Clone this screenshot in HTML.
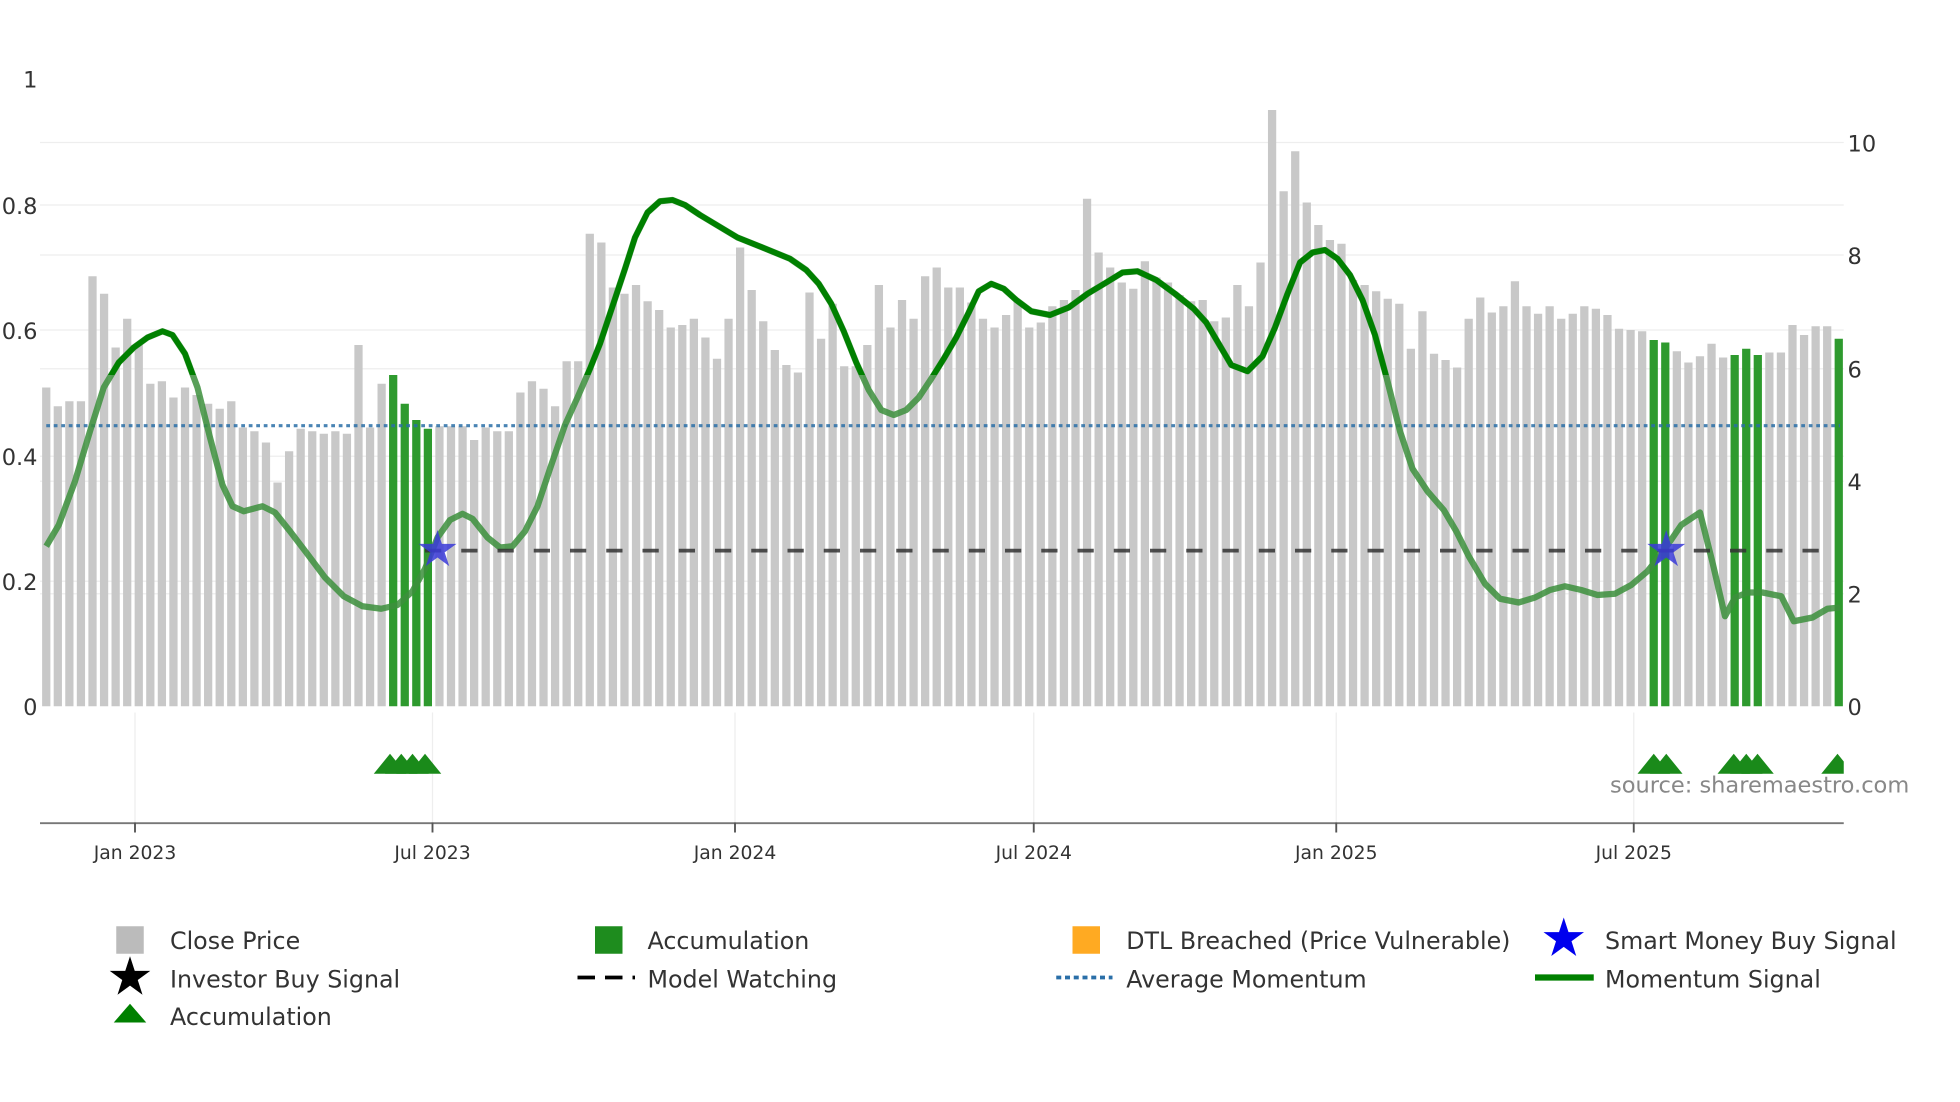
<!DOCTYPE html>
<html><head><meta charset="utf-8"><style>
html,body{margin:0;padding:0;background:#fff;width:1960px;height:1102px;overflow:hidden}
svg{display:block}
text{font-family:"DejaVu Sans","Liberation Sans",sans-serif;fill:#333}
</style></head><body>
<svg id="s" width="1960" height="1102" viewBox="0 0 1568 881.6" xmlns="http://www.w3.org/2000/svg">
<g stroke="#eee" stroke-width="1">
<line x1="32" x2="1475" y1="114" y2="114"/><line x1="32" x2="1475" y1="164" y2="164"/>
<line x1="32" x2="1475" y1="204" y2="204"/><line x1="32" x2="1475" y1="264" y2="264"/>
<line x1="32" x2="1475" y1="295" y2="295"/><line x1="32" x2="1475" y1="365" y2="365"/>
<line x1="32" x2="1475" y1="385" y2="385"/><line x1="32" x2="1475" y1="465" y2="465"/>
<line x1="32" x2="1475" y1="475" y2="475"/>
<line x1="108" x2="108" y1="570" y2="658"/><line x1="346" x2="346" y1="570" y2="658"/>
<line x1="588" x2="588" y1="570" y2="658"/><line x1="827" x2="827" y1="570" y2="658"/>
<line x1="1069" x2="1069" y1="570" y2="658"/><line x1="1307" x2="1307" y1="570" y2="658"/>
</g>
<g id="bars"></g>
<line x1="37" x2="1472" y1="340.5" y2="340.5" stroke="#2a6fa8" stroke-width="2.5" stroke-dasharray="3,3" opacity="0.85"/>
<path id="mom" fill="none" stroke="#3c8f3c" stroke-width="5" stroke-opacity="0.85" stroke-linejoin="round"/>
<clipPath id="c"><rect x="0" y="0" width="1550" height="300"/></clipPath>
<path id="mom2" fill="none" stroke="#008000" stroke-width="4.5" clip-path="url(#c)" stroke-linejoin="round"/>
<line x1="340" x2="1462" y1="440.5" y2="440.5" stroke="#333" stroke-width="3" stroke-dasharray="13,16" opacity="0.85"/>
<g fill="#3a3ad8" opacity="0.85">
<polygon id="st1" points=""/><polygon id="st2" points=""/>
</g>
<g id="tri" fill="#1a8a1a"></g>
<line x1="32" x2="1475" y1="658.5" y2="658.5" stroke="#777" stroke-width="1.5"/>
<g stroke="#555" stroke-width="1.5">
<line x1="108" x2="108" y1="658" y2="666"/><line x1="346" x2="346" y1="658" y2="666"/>
<line x1="588" x2="588" y1="658" y2="666"/><line x1="827" x2="827" y1="658" y2="666"/>
<line x1="1069" x2="1069" y1="658" y2="666"/><line x1="1307" x2="1307" y1="658" y2="666"/>
</g>
<g font-size="15" text-anchor="middle">
<text x="108" y="687">Jan 2023</text><text x="346" y="687">Jul 2023</text>
<text x="588" y="687">Jan 2024</text><text x="827" y="687">Jul 2024</text>
<text x="1069" y="687">Jan 2025</text><text x="1307" y="687">Jul 2025</text>
</g>
<g font-size="18" text-anchor="end">
<text x="30" y="70">1</text><text x="30" y="171">0.8</text><text x="30" y="271">0.6</text>
<text x="30" y="372">0.4</text><text x="30" y="472">0.2</text><text x="30" y="572">0</text>
</g>
<g font-size="18">
<text x="1478" y="121">10</text><text x="1478" y="211">8</text><text x="1478" y="302">6</text>
<text x="1478" y="392">4</text><text x="1478" y="482">2</text><text x="1478" y="572">0</text>
</g>
<text x="1288" y="634" font-size="18" style="fill:#888">source: sharemaestro.com</text>
<g font-size="19">
<rect x="93" y="741" width="22" height="22" fill="#bbb"/><text x="136" y="759">Close Price</text>
<rect x="476" y="741" width="22" height="22" fill="#1e8c1e"/><text x="518" y="759">Accumulation</text>
<rect x="858" y="741" width="22" height="22" fill="#ffaa22"/><text x="901" y="759">DTL Breached (Price Vulnerable)</text>
<polygon id="ls1" fill="#0000ee"/><text x="1284" y="759">Smart Money Buy Signal</text>
<polygon id="ls2" fill="#000"/><text x="136" y="790">Investor Buy Signal</text>
<line x1="462" x2="508" y1="782" y2="782" stroke="#000" stroke-width="3" stroke-dasharray="14,8"/><text x="518" y="790">Model Watching</text>
<line x1="845" x2="890" y1="782" y2="782" stroke="#2a6fa8" stroke-width="3" stroke-dasharray="4,3"/><text x="901" y="790">Average Momentum</text>
<line x1="1228" x2="1275" y1="782" y2="782" stroke="#008000" stroke-width="5"/><text x="1284" y="790">Momentum Signal</text>
<polygon points="104,803 117,818 91,818" fill="#008000"/><text x="136" y="820">Accumulation</text>
</g>
</svg>
<script>
var tops=[310,325,321,321,221,235,278,255,276,307,305,318,310,316,323,327,321,342,345,354,386,361,343,345,347,345,347,276,342,307,300,323,336,343,341,341,341,352,342,345,345,314,305,311,325,289,289,187,194,230,228,241,248,262,260,255,270,287,255,198,232,257,280,292,298,234,271,243,293,293,276,228,262,255,221,214,230,230,242,255,262,252,241,262,258,245,240,232,159,202,214,226,231,209,222,226,236,241,240,257,254,228,245,210,88,153,121,162,180,192,195,224,228,233,239,243,279,249,283,272,284,288,294,255,238,250,245,225,245,251,245,255,251,245,247,252,263,264,265,272,274,281,290,285,275,286,284,279,284,282,282,260,268,261,261,271];
tops.splice(119,2);tops.splice(73,0,240);tops.splice(50,0,235);
var gx=[312,321,330,340,1323,1333,1387,1397,1406,1470];
var g=document.getElementById('bars'),n=tops.length,h='';
for(var i=0;i<n;i++){var x=37+i*(1434/(n-1));var gr=gx.some(function(v){return Math.abs(v-x)<4.6;});
h+='<rect x="'+(x-3.3)+'" y="'+tops[i]+'" width="6.6" height="'+(565-tops[i])+'" fill="'+(gr?'#2e9a2e':'#c8c8c8')+'"/>';}
g.innerHTML=h;
var pts=[[37,437],[47,420],[60,385],[72,345],[83,310],[95,290],[107,278],[118,270],[130,265],[138,268],[148,283],[158,310],[168,350],[178,388],[186,405],[195,409],[210,405],[220,410],[232,425],[245,442],[260,462],[275,477],[290,485],[305,487],[318,484],[330,473],[340,455],[350,430],[360,416],[370,411],[378,415],[390,430],[400,438],[410,437],[420,425],[430,405],[440,375],[452,340],[462,318],[472,295],[480,275],[490,245],[500,215],[508,190],[518,170],[528,161],[538,160],[548,164],[560,172],[575,181],[590,190],[610,198],[632,207],[645,216],[655,227],[665,243],[675,265],[685,290],[695,312],[705,328],[715,332],[725,328],[735,318],[745,303],[755,287],[765,270],[775,250],[783,233],[793,227],[803,231],[813,240],[825,249],[840,252],[855,246],[870,235],[885,226],[898,218],[910,217],[925,224],[940,235],[955,247],[965,258],[975,275],[985,292],[998,297],[1010,285],[1020,262],[1030,235],[1040,210],[1050,202],[1060,200],[1070,207],[1080,220],[1090,240],[1100,268],[1110,305],[1120,345],[1130,375],[1142,393],[1155,408],[1165,425],[1175,445],[1188,467],[1200,479],[1215,482],[1228,478],[1240,472],[1252,469],[1265,472],[1278,476],[1292,475],[1305,468],[1318,457],[1330,442],[1345,420],[1360,410],[1370,450],[1380,493],[1388,478],[1398,474],[1410,474],[1425,477],[1435,497],[1450,494],[1462,487],[1472,486]];
var d='M'+pts.map(function(p){return p[0]+','+p[1]}).join(' L');
document.getElementById('mom').setAttribute('d',d);
document.getElementById('mom2').setAttribute('d',d);
function star(cx,cy,R,r){var s=[];for(var k=0;k<10;k++){var a=-Math.PI/2+k*Math.PI/5,rr=k%2?r:R;s.push((cx+rr*Math.cos(a)).toFixed(1)+','+(cy+rr*Math.sin(a)).toFixed(1));}return s.join(' ');}
document.getElementById('st1').setAttribute('points',star(350,440,16,6));
document.getElementById('st2').setAttribute('points',star(1333,440,16,6));
document.getElementById('ls1').setAttribute('points',star(1251,751,17,6.5));
document.getElementById('ls2').setAttribute('points',star(104,782,17,6.5));
var t='';
gx.forEach(function(x){var x2=Math.min(x+13,1475);t+='<polygon points="'+x+',603 '+x2+','+(x2<x+13?619-(x+13-x2)*16/13:619)+' '+x2+',619 '+(x-13)+',619"/>';});
document.getElementById('tri').innerHTML=t;
</script>
</body></html>
